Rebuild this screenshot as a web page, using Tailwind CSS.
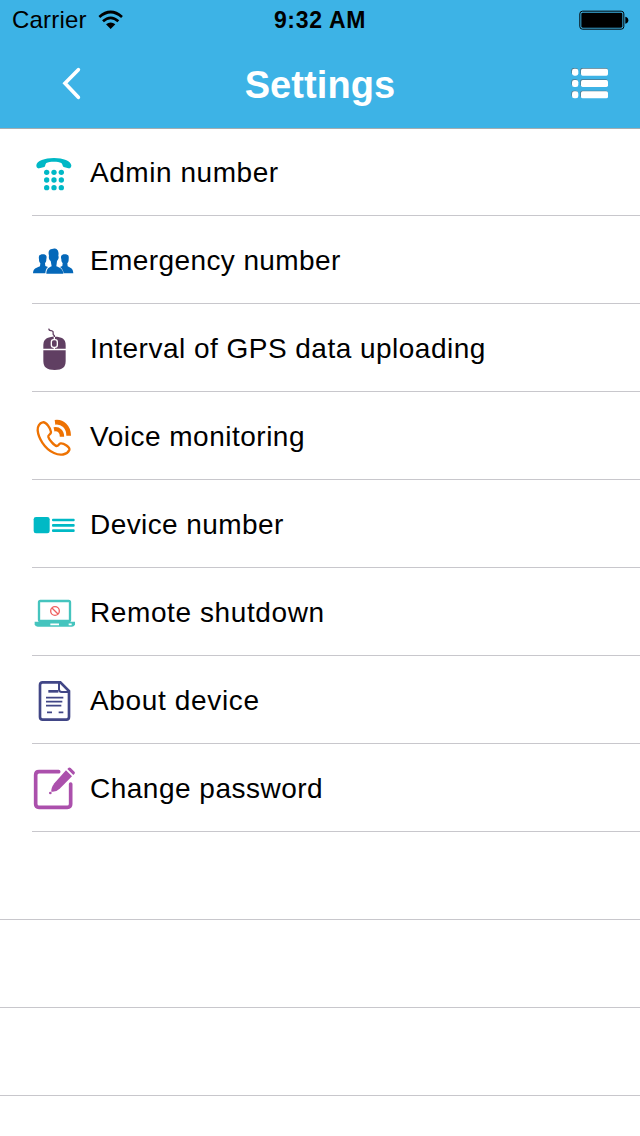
<!DOCTYPE html>
<html lang="en">
<head>
  <meta charset="UTF-8">
  <meta name="viewport" content="width=device-width, initial-scale=1.0">
  <title>Settings</title>
  <script src="https://cdn.jsdelivr.net/npm/@tailwindcss/browser@4"></script>
</head>
<body class="bg-white text-black font-['Liberation_Sans',Arial,sans-serif] h-[1136px] overflow-hidden">
  <!-- Header -->
  <header class="bg-[#3db3e6] h-[129px] -mb-px border-b border-[#a4adb1]">
    <!-- Status bar -->
    <div class="h-10 grid grid-cols-3 items-center px-[11px] text-[24px] leading-10">
      <div class="flex items-center pl-px">
        <span class="w-[86px] tracking-[0.2px]">Carrier</span>
        <svg class="w-[26px] h-5" viewBox="294 30 78 60" fill="none" stroke="#000">
          <path d="M298 51Q332 21 366 51" stroke-width="8"/>
          <path d="M309 64Q332 43 355 64" stroke-width="8"/>
          <path d="M318 73Q332 62 346 73L332 87Z" fill="#000" stroke="none"/>
        </svg>
      </div>
      <span class="text-center font-bold text-[23px] tracking-[0.7px]">9:32 AM</span>
      <svg class="justify-self-end w-[50px] h-5" viewBox="119 31 150 60">
        <rect x="121.500" y="34.500" width="132" height="54" rx="8" fill="none" stroke="#000" stroke-width="3"/>
        <rect x="126" y="39" width="123" height="45" rx="4"/>
        <path d="M258 51Q267 53 267 61.500T258 72Z"/>
      </svg>
    </div>
    <!-- Navigation bar -->
    <div class="h-[88px] flex items-center justify-between pl-[60px] pr-[30px] text-white">
      <svg class="w-10 h-9" viewBox="180 198 120 108" fill="none" stroke="#fff" stroke-width="11" stroke-linecap="round" stroke-linejoin="miter">
        <path d="M235 209L195 250L235 292"/>
      </svg>
      <h1 class="mr-[30px] pt-0.5 font-bold text-[38px] tracking-[0.1px] whitespace-nowrap">Settings</h1>
      <svg class="w-10 h-9" viewBox="90 198 120 108">
        <g fill="#4f7688">
          <rect x="94" y="204" width="20" height="20" rx="7"/><rect x="121" y="204" width="82" height="20" rx="5"/>
          <rect x="94" y="238" width="20" height="20" rx="7"/><rect x="121" y="238" width="82" height="20" rx="5"/>
          <rect x="94" y="272" width="20" height="20" rx="7"/><rect x="121" y="272" width="82" height="20" rx="5"/>
        </g>
        <g fill="#fff">
          <rect x="96" y="206" width="19" height="21" rx="7"/><rect x="123" y="206" width="81" height="21" rx="5"/>
          <rect x="96" y="240" width="19" height="21" rx="7"/><rect x="123" y="240" width="81" height="21" rx="5"/>
          <rect x="96" y="274" width="19" height="21" rx="7"/><rect x="123" y="274" width="81" height="21" rx="5"/>
        </g>
      </svg>
    </div>
  </header>

  <!-- Settings list -->
  <ul class="pl-8 text-[28px]">
    <li class="h-[88px] flex items-center border-b border-[#c8c7cc]">
      <svg class="w-[52px] h-[51px] mr-1.5" viewBox="24 0 156 153" fill="#00b8c6">
        <path d="M37 58C38 45 62 36 90 36S140 45 142 58C142 65 139 68 133 67L119 63C115 61 116 54 112 51C102 46 77 46 67 51C63 54 65 61 61 63L46 67C40 68 37 65 37 58Z"/>
        <circle cx="68" cy="79" r="8"/><circle cx="90" cy="79" r="8"/><circle cx="112" cy="79" r="8"/>
        <circle cx="68" cy="102" r="8"/><circle cx="90" cy="102" r="8"/><circle cx="112" cy="102" r="8"/>
        <circle cx="68" cy="125" r="8"/><circle cx="90" cy="125" r="8"/><circle cx="112" cy="125" r="8"/>
      </svg>
      <span class="pt-0.5 tracking-[0.55px]">Admin number</span>
    </li>
    <li class="h-[88px] flex items-center border-b border-[#c8c7cc]">
      <svg class="w-[52px] h-[51px] mr-1.5" viewBox="24 0 156 153" fill="#0568b9">
        <path d="M27 118C28 106 32 103 48 97L49 88C45 84 45 80 45 76C43 65 47 61 57 61C66 61 70 66 67 76C67 81 66 84 63 88L64 96L72 99C67 103 65 108 64 118Z"/>
        <path d="M148 118C147 106 144 103 131 97L130 88C134 84 134 80 134 76C136 65 132 61 122 61C113 61 109 66 112 76C112 81 113 84 116 88L115 96L108 99C114 103 117 108 119 118Z"/>
        <path d="M67 119C68 105 72 102 83 97L80 81C74 76 74 70 75 65C71 50 77 46 84 45C92 41 107 44 103 65C105 70 104 76 99 81L97 97C109 102 117 105 118 119Z"/>
      </svg>
      <span class="pt-0.5 tracking-[0.4px]">Emergency number</span>
    </li>
    <li class="h-[88px] flex items-center border-b border-[#c8c7cc]">
      <svg class="w-[52px] h-[51px] mr-1.5" viewBox="24 0 156 153" fill="#603f62">
        <path d="M58 80V69C58 50 71 44 92 44S125 50 125 69V80Z"/>
        <path d="M58 85H125V117C125 136 115 144 92 144S58 136 58 117Z"/>
        <path d="M91 44V52M91 76V82" stroke="#fff" stroke-width="4"/>
        <rect x="82" y="53" width="18" height="23" rx="7" stroke="#fff" stroke-width="4"/>
        <path d="M74 20C76 30 81 24 85 27C92 31 82 34 91 41V45" fill="none" stroke="#603f62" stroke-width="4"/>
      </svg>
      <span class="pt-0.5 tracking-[0.48px]">Interval of GPS data uploading</span>
    </li>
    <li class="h-[88px] flex items-center border-b border-[#c8c7cc]">
      <svg class="w-[52px] h-[51px] mr-1.5" viewBox="24 0 156 153" fill="none" stroke="#ee7202">
        <path d="M56 37C47 39 40 49 41 61C43 83 61 116 90 129C108 138 129 135 136 120C139 112 119 99 110 100C104 101 104 108 98 108C91 107 75 89 73 81C71 73 81 75 81 66C80 56 66 34 56 37Z" stroke-width="7"/>
        <path d="M93 37C116 34 134 51 134 77" stroke-width="14"/>
        <path d="M90 58C104 55 114 65 114 80" stroke-width="13"/>
      </svg>
      <span class="pt-0.5 tracking-[0.5px]">Voice monitoring</span>
    </li>
    <li class="h-[88px] flex items-center border-b border-[#c8c7cc]">
      <svg class="w-[52px] h-[51px] mr-1.5" viewBox="24 0 156 153" fill="#00b9c5">
        <rect x="29" y="57" width="48" height="49" rx="7"/>
        <rect x="84" y="62" width="68" height="8" rx="3"/>
        <rect x="84" y="78" width="68" height="8" rx="3"/>
        <rect x="84" y="94" width="68" height="8" rx="3"/>
      </svg>
      <span class="pt-0.5 tracking-[0.42px]">Device number</span>
    </li>
    <li class="h-[88px] flex items-center border-b border-[#c8c7cc]">
      <svg class="w-[52px] h-[51px] mr-1.5" viewBox="24 0 156 153" fill="#45c4be">
        <rect x="45" y="45" width="93" height="60" rx="4" fill="none" stroke="#45c4be" stroke-width="7"/>
        <path d="M32 107H153V115Q152 122 144 122H41Q33 122 32 115Z"/>
        <path d="M79 115H105M134 115H143" stroke="#fff" stroke-width="5"/>
        <circle cx="93" cy="75" r="13" fill="none" stroke="#ee605f" stroke-width="4"/>
        <path d="M84 66L102 84" stroke="#ee605f" stroke-width="4"/>
      </svg>
      <span class="pt-0.5 tracking-[0.6px]">Remote shutdown</span>
    </li>
    <li class="h-[88px] flex items-center border-b border-[#c8c7cc]">
      <svg class="w-[52px] h-[51px] mr-1.5" viewBox="24 0 156 153" fill="none" stroke="#414686" stroke-width="6">
        <path d="M56 25H109L135 51V128Q135 137 127 137H56Q48 137 48 129V33Q48 25 56 25Z" stroke-width="8"/>
        <path d="M105 26V46Q105 54 113 54H135"/>
        <path d="M73 52H103" stroke-width="8"/>
        <path d="M66 71H118M66 83H115M66 95H112M69 115H84M104 115H118" stroke-width="5"/>
      </svg>
      <span class="pt-0.5 tracking-[0.65px]">About device</span>
    </li>
    <li class="h-[88px] flex items-center border-b border-[#c8c7cc]">
      <svg class="w-[52px] h-[51px] mr-1.5" viewBox="24 0 156 153" fill="#ab50ac">
        <path d="M104 29H45Q35 29 35 39V126Q35 136 45 136H130Q140 136 140 126V66" fill="none" stroke="#ab50ac" stroke-width="11" stroke-linecap="round"/>
        <path d="M126 25L144 43L107 80Q96 91 82 89Q81 78 91 64Z"/>
        <path d="M130 21L134 17Q137 15 140 18L152 30Q154 33 151 36L148 39Z"/>
        <circle cx="79" cy="93" r="4"/>
      </svg>
      <span class="pt-0.5 tracking-[0.5px]">Change password</span>
    </li>
  </ul>

  <!-- Empty rows -->
  <div class="h-[88px] border-b border-[#c8c7cc]"></div>
  <div class="h-[88px] border-b border-[#c8c7cc]"></div>
  <div class="h-[88px] border-b border-[#c8c7cc]"></div>
</body>
</html>
